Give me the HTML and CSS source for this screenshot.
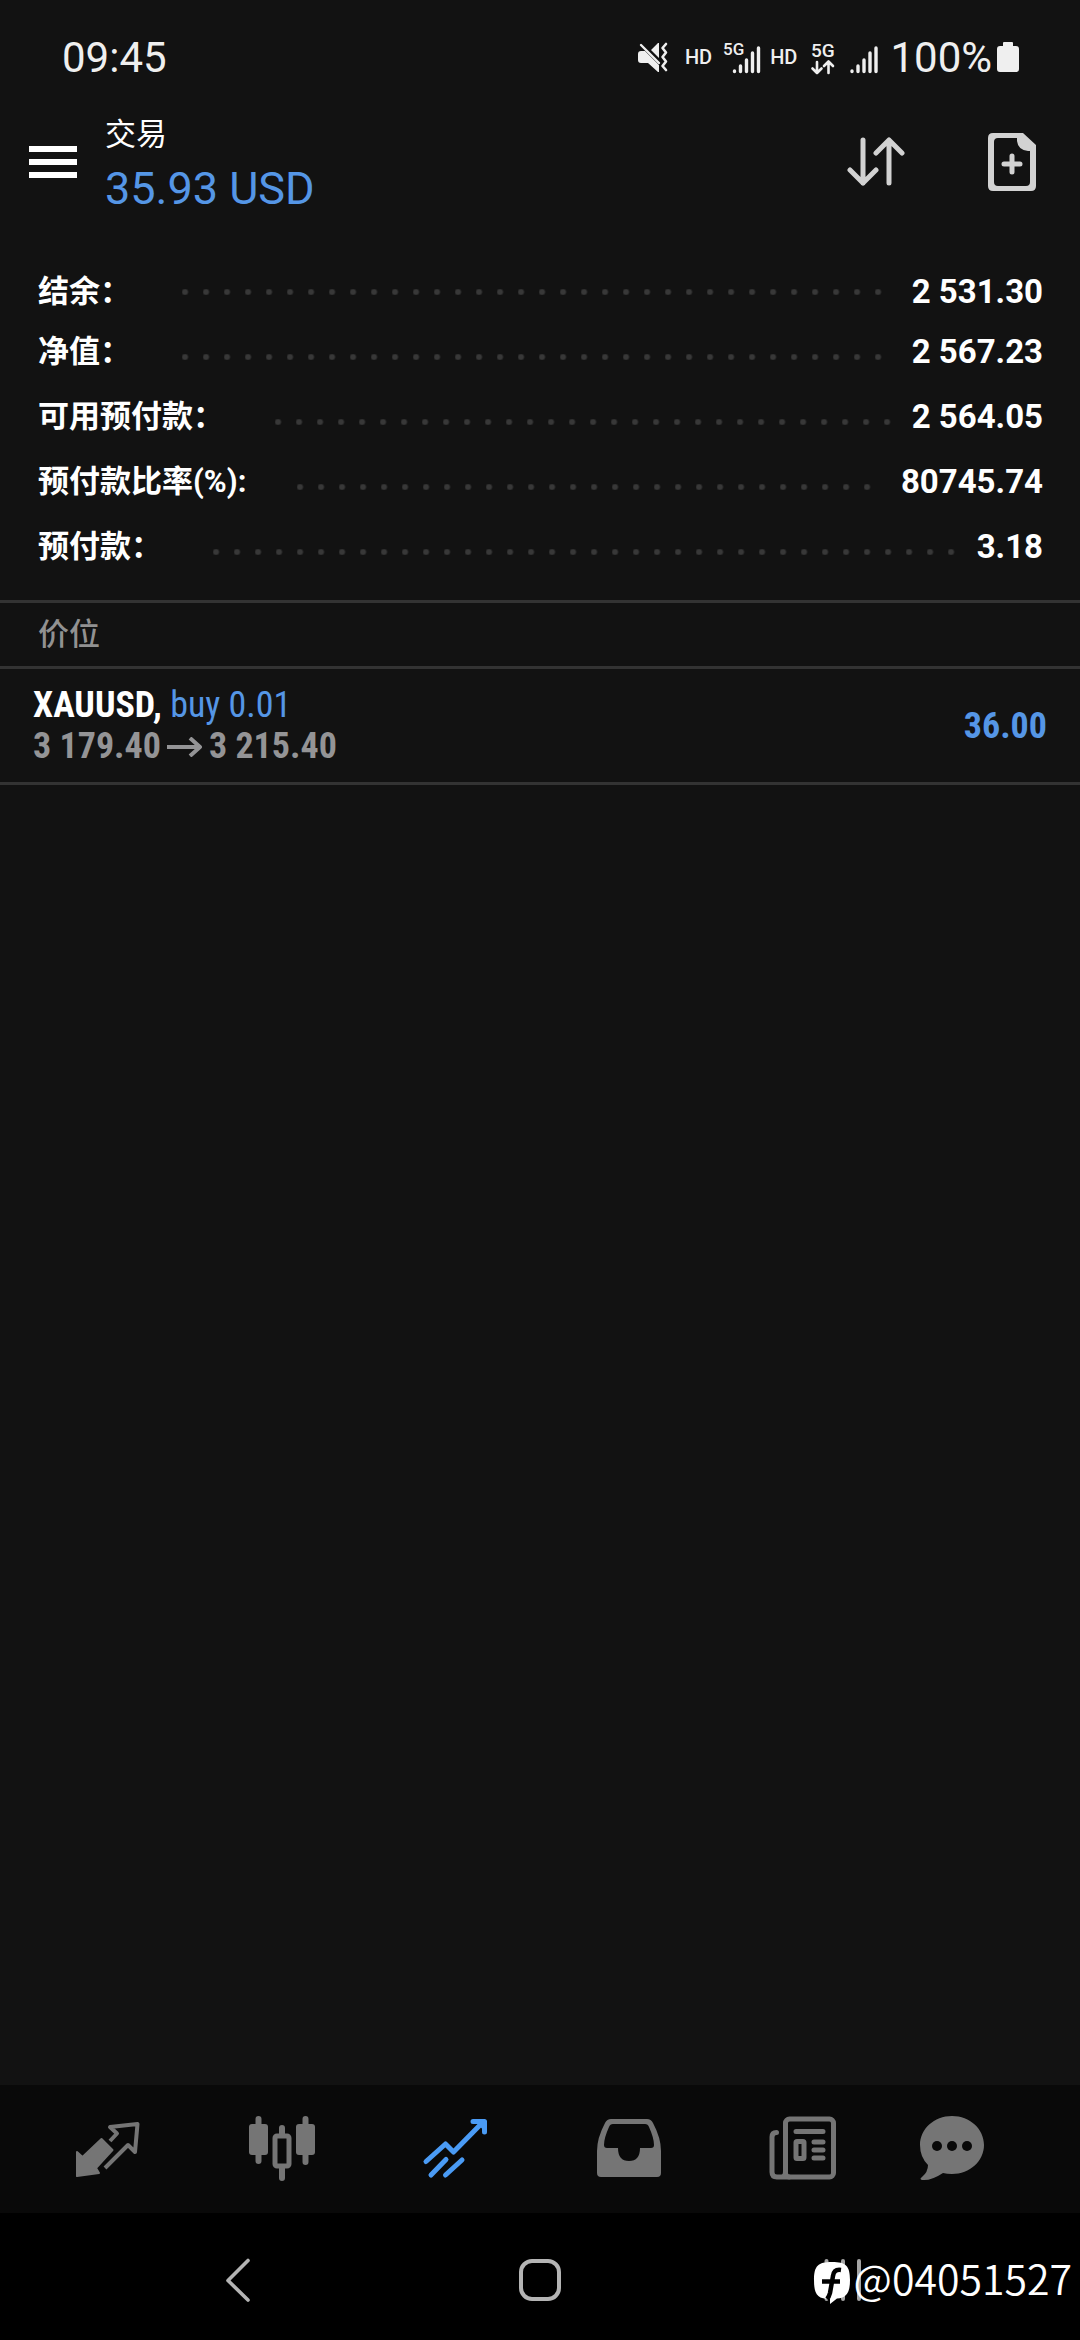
FILE: index.html
```html
<!DOCTYPE html>
<html lang="zh-CN">
<head>
<meta charset="utf-8">
<meta name="viewport" content="width=device-width">
<title>交易</title>
<link rel="stylesheet" href="styles.css">
</head>
<body>
<div class="app">
  <div class="status">
    <span class="clock">09:45</span>
    <div class="status-icons">
      <svg class="mute" width="30" height="30" viewBox="0 0 30 30">
        <path fill="#efefef" d="M3 9h4l14 14v7h-1l-10-9H3q-3 0-3-3v-6q0-3 3-3zM13 8l7-7h1v15z"/>
        <path fill="none" stroke="#efefef" stroke-width="2.400" stroke-linecap="round" d="M3 3l18 18"/>
        <path fill="none" stroke="#efefef" stroke-width="2.600" stroke-linecap="round" stroke-linejoin="round" d="M28 2l-3.500 4 3.500 4.500-3.500 4.500 3.500 4.500-3.500 4.500 3.500 4"/>
      </svg>
      <span class="hd">HD</span>
      <svg class="net" width="38" height="36" viewBox="0 0 38 36">
        <text class="net-sm" x="0" y="16">5G</text>
        <path fill="none" stroke="#efefef" stroke-width="3.400" stroke-linecap="round" d="M11.500 32v.5M17.500 27v5.500M23.500 21v11.500M29.500 14v18.500M35.500 9v23.500"/>
      </svg>
      <span class="hd hd-second">HD</span>
      <svg class="net" width="28" height="36" viewBox="0 0 28 36">
        <text class="net-lg" x="1" y="18">5G</text>
        <path fill="none" stroke="#efefef" stroke-width="2.600" stroke-linecap="round" stroke-linejoin="round" d="M7 23v11M2.500 29.500L7 34l4.500-4.500M18.500 34V23M14 27l4.500-4.500L23 27"/>
      </svg>
      <svg class="bars" width="28" height="36" viewBox="0 0 28 36">
        <path fill="none" stroke="#efefef" stroke-width="3.400" stroke-linecap="round" d="M2 32v.5M8 27v5.500M14 21v11.500M20 14v18.500M26 9v23.500"/>
      </svg>
      <span class="percent">100%</span>
      <svg class="battery" width="22" height="30" viewBox="0 0 22 30">
        <path fill="#efefef" d="M7 0h8q1 0 1 1v3h3q3 0 3 3v20q0 3-3 3H3q-3 0-3-3V7q0-3 3-3h3V1q0-1 1-1z"/>
      </svg>
    </div>
  </div>

  <header class="header">
    <button class="icon-btn" aria-label="菜单">
      <svg width="48" height="60" viewBox="0 0 48 60"><path fill="#fff" d="M0 14h48v6H0zM0 27h48v6H0zM0 40h48v6H0z"/></svg>
    </button>
    <div class="heading">
      <h1 class="title">交易</h1>
      <p class="profit">35.93 USD</p>
    </div>
    <button class="icon-btn" aria-label="排序">
      <svg width="58" height="60" viewBox="0 0 58 60"><path fill="none" stroke="#d2d2d2" stroke-width="5" stroke-linecap="round" stroke-linejoin="round" d="M16 8v43M3 38l13 13 13-13M42 51V8M29 21L42 8l13 13"/></svg>
    </button>
    <button class="icon-btn" aria-label="新订单">
      <svg width="48" height="60" viewBox="0 0 48 60">
        <path fill="#d2d2d2" fill-rule="evenodd" d="M5 1h30l13 12v41q0 5-5 5H5q-5 0-5-5V6q0-5 5-5zM10 6q-4 0-4 4v40q0 4 4 4h28q4 0 4-4V19h-2q-10-1-11-10V6z"/>
        <path stroke="#d2d2d2" stroke-width="5" stroke-linecap="round" d="M24 24v16M16 32h16"/>
      </svg>
    </button>
  </header>

  <main class="content">
    <dl class="account">
      <div class="line"><dt>结余：</dt><dd>2 531.30</dd></div>
      <div class="line"><dt>净值：</dt><dd>2 567.23</dd></div>
      <div class="line"><dt>可用预付款：</dt><dd>2 564.05</dd></div>
      <div class="line"><dt>预付款比率(%):</dt><dd>80745.74</dd></div>
      <div class="line"><dt>预付款：</dt><dd>3.18</dd></div>
    </dl>
    <h2 class="section">价位</h2>
    <div class="position">
      <div class="deal">
        <p><strong class="symbol">XAUUSD,</strong> <span class="side">buy 0.01</span></p>
        <p class="prices">3 179.40
          <svg width="36" height="20" viewBox="0 0 36 20"><path fill="none" stroke="#949496" stroke-width="4" stroke-linejoin="round" d="M0 10h33M23 1l10 9-10 9"/></svg>
          3 215.40</p>
      </div>
      <span class="gain">36.00</span>
    </div>
  </main>

  <nav class="tabs">
    <a href="#quotes" aria-label="行情">
      <svg width="72" height="70" viewBox="0 0 72 70">
        <path fill="#757575" stroke="#757575" stroke-width="2" stroke-linejoin="round" d="M5 38l5.500 5L29.500 25 40.500 36 24 54l3 5L5 62z"/>
        <path fill="none" stroke="#757575" stroke-width="4" stroke-linejoin="round" d="M38 27l7-7.500-7-6.500 27.500-3-2.500 28-7-7-23 23"/>
      </svg>
    </a>
    <a href="#chart" aria-label="图表">
      <svg width="72" height="70" viewBox="0 0 72 70">
        <path stroke="#757575" stroke-width="6" stroke-linecap="round" d="M12.500 5v42M36 14v8M36 54v10M59.500 5v43"/>
        <rect x="3" y="10" width="19" height="31" rx="3" fill="#757575"/>
        <rect x="50" y="10" width="19" height="31" rx="3" fill="#757575"/>
        <rect x="29" y="22" width="14" height="30" rx="2" fill="#090909" stroke="#757575" stroke-width="5"/>
      </svg>
    </a>
    <a href="#trade" aria-label="交易" aria-current="page">
      <svg width="72" height="70" viewBox="0 0 72 70">
        <path fill="none" stroke="#4a9bf5" stroke-width="5" stroke-linecap="round" stroke-linejoin="round" d="M7 47.500L26.500 30l8 8L64 8M54 7.500h11.500V18M12 61l15-15.500M26.500 61L43 46"/>
        <path fill="#4a9bf5" d="M55 6h12v13z"/>
      </svg>
    </a>
    <a href="#history" aria-label="历史">
      <svg width="72" height="70" viewBox="0 0 72 70">
        <path fill="#757575" fill-rule="evenodd" d="M18 5h36q4 0 6 4 8 15 8 28v22q0 4-4 4H8q-4 0-4-4V37Q4 24 12 9q2-4 6-4zM20 10q-3 0-4 3Q11 24 11 31q0 3 3 3h11q0 13 11 13t11-13h11q3 0 3-3 0-7-5-18-1-3-4-3z"/>
      </svg>
    </a>
    <a href="#news" aria-label="新闻">
      <svg width="72" height="70" viewBox="0 0 72 70">
        <g fill="none" stroke="#757575" stroke-width="5">
          <rect x="18.500" y="5" width="48" height="58" rx="4"/>
          <path stroke-linecap="round" d="M9.500 18.500Q5 18.500 5 23v35q0 5 5 5h12M18.500 57q0 6-4 6M29 17.500h27M47 28h9M47 36h9M47 44h9"/>
          <rect x="29" y="27.500" width="8" height="17" rx="1"/>
        </g>
      </svg>
    </a>
    <a href="#messages" aria-label="消息">
      <svg width="72" height="70" viewBox="0 0 72 70">
        <path fill="#757575" d="M36 2c18 0 32 13 32 29S54 60 36 60q-5 0-9-1-12 8-21 7-3-1 0-3 6-5 6-12-8-8-8-20C4 15 18 2 36 2z"/>
        <g fill="#090909"><circle cx="21" cy="32" r="5"/><circle cx="36" cy="32" r="5"/><circle cx="51" cy="32" r="5"/></g>
      </svg>
    </a>
  </nav>

  <div class="system">
    <button class="icon-btn" aria-label="返回">
      <svg width="44" height="44" viewBox="0 0 44 44"><path fill="none" stroke="#b4b4b4" stroke-width="3.600" stroke-linecap="round" stroke-linejoin="round" d="M32 2.500L12 22.500l20 19.500"/></svg>
    </button>
    <button class="icon-btn" aria-label="主屏幕">
      <svg width="44" height="44" viewBox="0 0 44 44"><rect x="3" y="3" width="38" height="38" rx="11" fill="none" stroke="#b4b4b4" stroke-width="4"/></svg>
    </button>
    <button class="icon-btn" aria-label="最近">
      <svg width="44" height="44" viewBox="0 0 44 44"><path stroke="#a4a4a4" stroke-width="4" stroke-linecap="round" d="M6.500 3v38M23 3v38M39 3v38"/></svg>
    </button>
    <div class="watermark">
      <svg class="badge" width="38" height="44" viewBox="0 0 38 44">
        <path fill="#fff" d="M19 1c14 0 18 4 18 18 0 12-3 18-13 18.500L17 43v-5C4 38 1 33 1 19 1 5 5 1 19 1z"/>
        <path fill="none" stroke="#000" stroke-width="4.500" d="M28 9q-7-1-8 6l-3 17q-1 4-3 6M9 20.500h18"/>
      </svg>
      <span>@04051527</span>
    </div>
  </div>
</div>
</body>
</html>
```
FILE: styles.css
```css
* {
  box-sizing: border-box;
}

body, h1, h2, p, dl, dd {
  margin: 0;
}

body {
  background: #121212;
  color: #fff;
  font-family: Roboto, "Noto Sans CJK SC", sans-serif;
}

svg {
  display: block;
}

.app {
  display: flex;
  flex-direction: column;
  min-height: 100vh;
}

.icon-btn {
  padding: 0;
  border: 0;
  background: none;
}

/* status bar */
.status {
  display: flex;
  justify-content: space-between;
  align-items: center;
  height: 108px;
  padding: 6px 61px 0 62px;
  color: #efefef;
  font-size: 42px;
}

.status-icons {
  display: flex;
  align-items: center;
}

.hd {
  margin: 0 11px 0 17px;
  font-size: 20px;
  font-weight: 500;
}

.hd-second {
  margin: 0 13px 0 9px;
}

.net-sm {
  fill: #efefef;
  font-size: 17px;
  font-weight: 500;
}

.net-lg {
  fill: #efefef;
  font-size: 19px;
  font-weight: 500;
}

.bars {
  margin: 0 12px 0 12px;
}

.battery {
  margin-left: 5px;
}

/* title bar */
.header {
  display: flex;
  align-items: center;
  padding: 0 44px 0 29px;
}

.heading {
  flex: 1;
  padding-left: 28px;
}

.title {
  font-size: 31px;
  font-weight: 400;
  line-height: 54px;
}

.profit {
  color: #5596e6;
  font-size: 45px;
  line-height: 54px;
}

.header .icon-btn:last-child {
  margin-left: 83px;
}

/* account summary */
.content {
  flex: 1;
}

.account {
  padding: 46px 37px 18px 38px;
}

.line {
  display: flex;
  height: 65px;
  font-size: 31px;
  font-weight: 700;
  line-height: 60px;
}

.line dt {
  display: flex;
  flex: 1;
}

.line dt::after {
  content: "";
  flex: 1;
  height: 6px;
  margin: 32px 19px 0 51px;
  background: radial-gradient(circle at 3px 3px, #383838 2px, transparent 4px) 0 0 / 21px 6px;
}

.line:first-child {
  height: 60px;
}

.line:first-child dt::after {
  margin-top: 27px;
}

.line dd {
  font-size: 33px;
}

.section {
  padding: 0 38px;
  border: solid #333;
  border-width: 3px 0;
  color: #919191;
  font-size: 31px;
  font-weight: 500;
  line-height: 63px;
}

/* open position */
.position {
  display: flex;
  justify-content: space-between;
  align-items: center;
  padding: 16px 33px 15px;
  border-bottom: 3px solid #333;
  font-family: "Roboto Condensed", Roboto, sans-serif;
  font-size: 36px;
  line-height: 41px;
}

.side,
.gain {
  color: #5596e6;
}

.gain {
  font-weight: 700;
}

.prices {
  display: flex;
  align-items: center;
  gap: 6px;
  color: #949496;
  font-weight: 700;
}

/* bottom tabs */
.tabs {
  display: grid;
  grid-template-columns: repeat(5, 1fr) 124px;
  justify-items: center;
  align-items: center;
  height: 128px;
  padding: 0 66px 0 21px;
  background: #090909;
}

/* system navigation */
.system {
  position: relative;
  display: grid;
  grid-template-columns: repeat(3, 1fr);
  justify-items: center;
  align-items: center;
  height: 127px;
  padding: 6px 87px 0;
  background: #000;
}

.watermark {
  position: absolute;
  right: 8px;
  bottom: 35px;
  display: flex;
  align-items: flex-start;
  gap: 3px;
  font-family: "Noto Sans CJK SC", sans-serif;
  font-size: 41px;
  font-weight: 350;
  line-height: 54px;
}

.badge {
  margin-top: 11px;
}
```
